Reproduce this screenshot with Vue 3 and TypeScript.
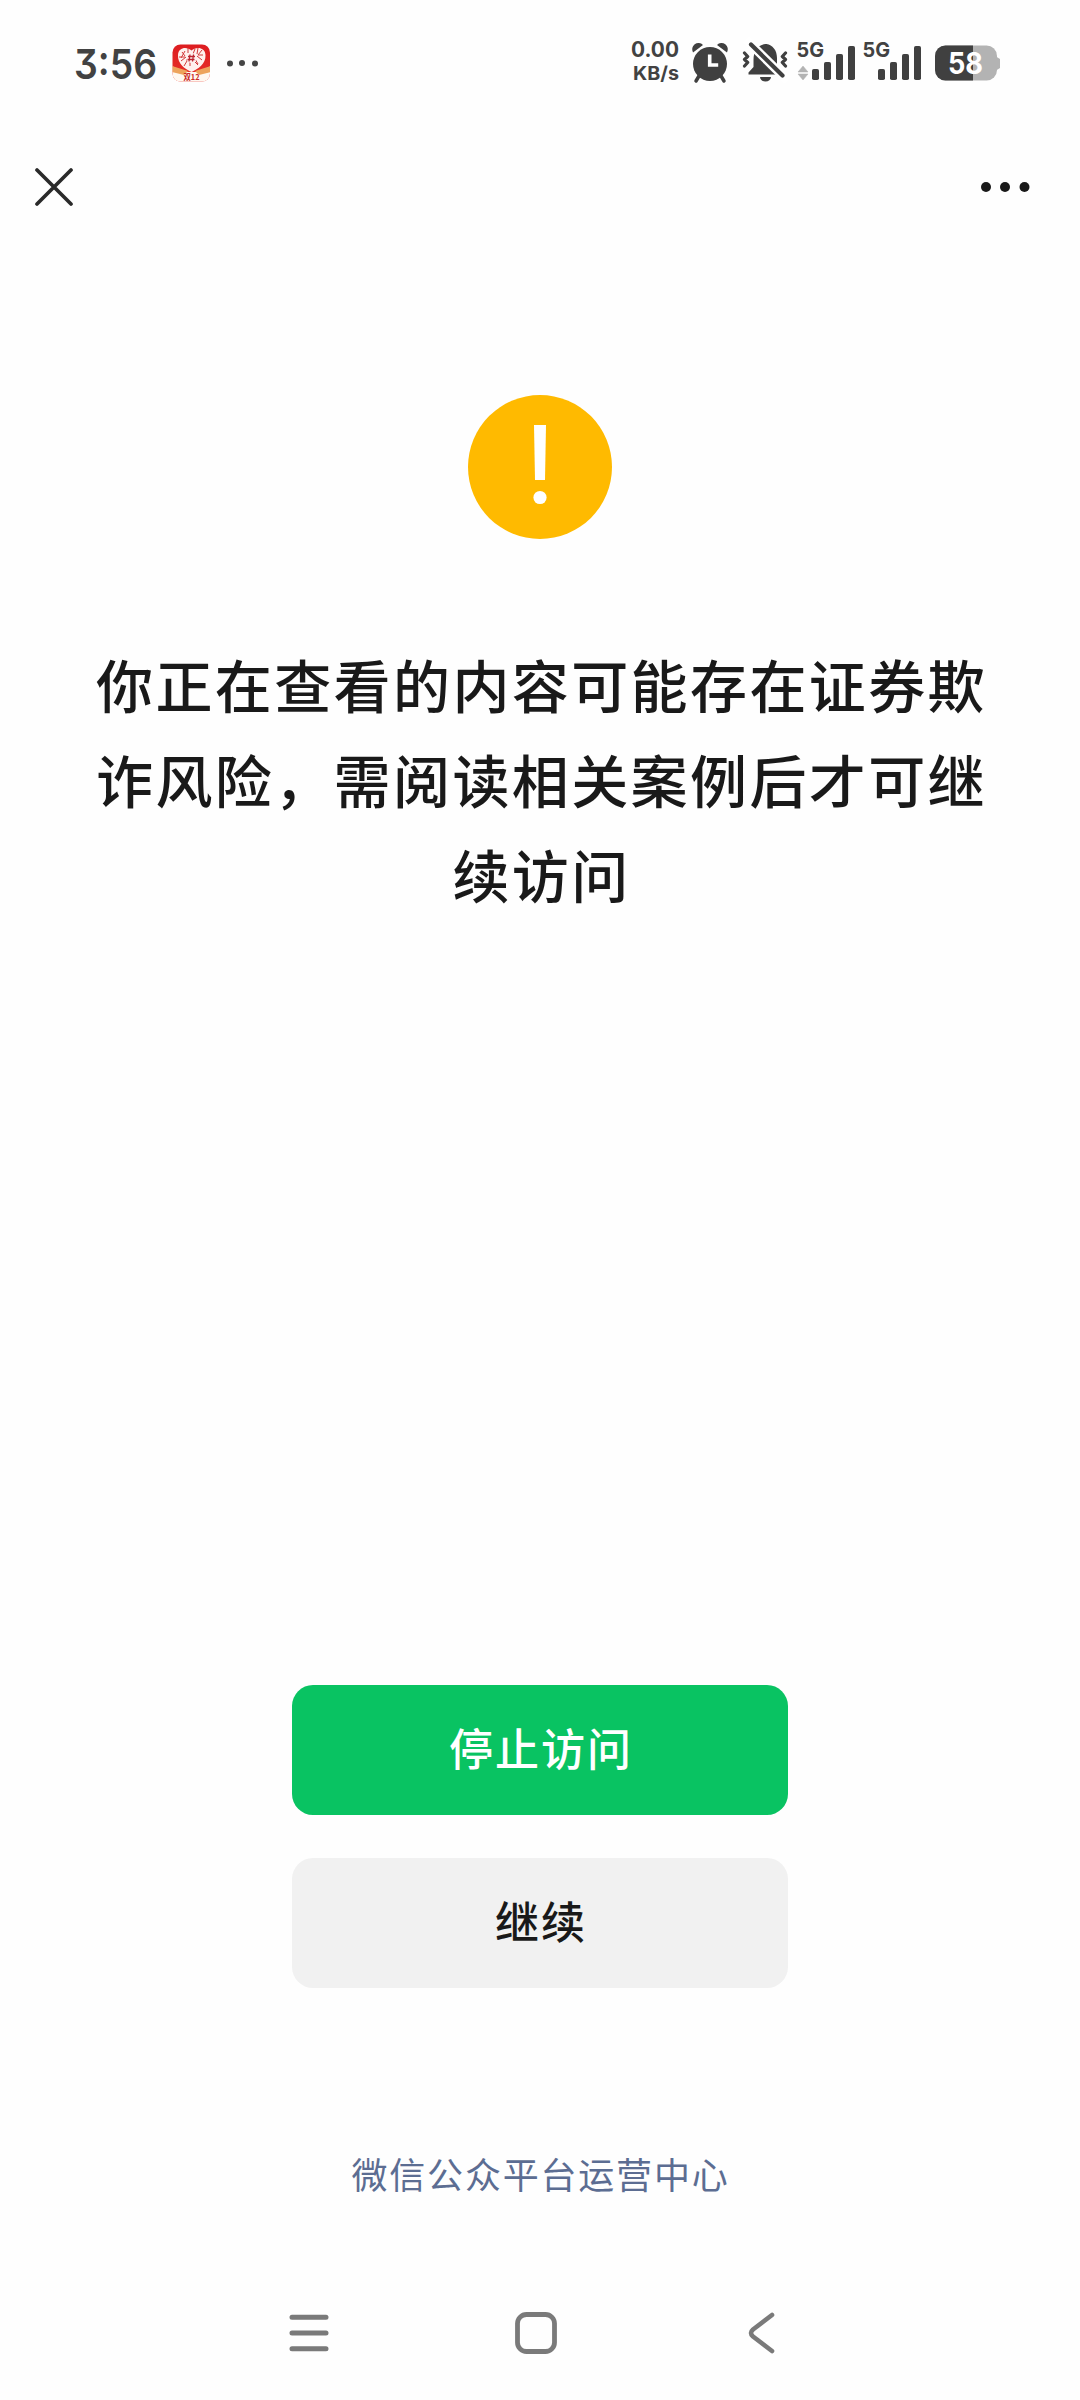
<script setup lang="ts">
const title: string[] = [
  '你正在查看的内容可能存在证券欺',
  '诈风险，需阅读相关案例后才可继',
  '续访问',
]
const signals: { id: string; x: number; data: boolean }[] = [
  { id: 'sim1', x: 796, data: true },
  { id: 'sim2', x: 862, data: false },
]
const bars = [
  { x: 16, y: 69, h: 11 },
  { x: 28, y: 62, h: 18 },
  { x: 40, y: 54, h: 26 },
  { x: 52, y: 46, h: 34 },
]
</script>

<template>
  <div class="screen">
    <header class="status">
      <svg width="1080" height="126" viewBox="0 0 1080 126">
        <!-- clock and notifications -->
        <text x="74" y="78.500" class="dark time" textLength="83" lengthAdjust="spacingAndGlyphs">3:56</text>
        <defs>
          <linearGradient id="appRed" x1="0" y1="0" x2="0" y2="1">
            <stop offset="0" stop-color="#dd1c20" />
            <stop offset="1" stop-color="#e8322a" />
          </linearGradient>
          <clipPath id="appClip"><rect x="172.500" y="44.500" width="37.500" height="37" rx="8" /></clipPath>
        </defs>
        <g clip-path="url(#appClip)">
          <rect x="172" y="44" width="39" height="38" fill="url(#appRed)" />
          <path d="M172 66L183 72H200L211 66V82H172Z" fill="#fff8f0" />
          <path d="M172 66L188 71L184 75L172 72ZM211 66L195 71L199 75L211 72Z" fill="#eda45c" />
        </g>
        <path d="M191.500 50.500C187 46.500 178.500 47 178 55C177.500 64 185 69 191.500 72C198 69 206 64 205.500 55C205 47 196 46.500 191.500 50.500Z" fill="#fff1ee" />
        <path d="M182 52l3 4m0-5l-4 7m0 3l5-4m-2 9l3-5m1-13v5m7-4l-2 5m5-6l-1 6m5-4l-4 5m5 0h-5m4 5l-5-4m1 8l-3-5m-5 7v-6m-4 0h6m3 2l3 3M179 57h6" stroke="#d33a3a" stroke-width="1" fill="none" />
        <circle cx="191.500" cy="58" r="5" fill="#fff1ee" />
        <path d="M190 54.500l-1 7m4.500-7l-1 7M188 56.500h7m-7.500 3h7" stroke="#bd2630" stroke-width="1.300" fill="none" />
        <text x="183.500" y="79.500" class="badge" textLength="16" lengthAdjust="spacingAndGlyphs">双12</text>
        <g fill="#454545">
          <circle cx="230" cy="63.500" r="3" /><circle cx="242" cy="63" r="3" /><circle cx="255" cy="63.500" r="3" />
        </g>

        <!-- network speed -->
        <text x="631" y="57" class="dark speed" textLength="48" lengthAdjust="spacingAndGlyphs">0.00</text>
        <text x="633" y="80" class="dark unit" textLength="46" lengthAdjust="spacingAndGlyphs">KB/s</text>

        <!-- alarm -->
        <path d="M693 52.500a6.300 6.300 0 0 1 10-7.500ZM727 52.500a6.300 6.300 0 0 0-10-7.500Z" fill="#404040" />
        <path d="M699 76l-3 5M721 76l3 5" stroke="#404040" stroke-width="3.500" stroke-linecap="round" />
        <circle cx="710" cy="64" r="17" fill="#404040" />
        <path d="M709.700 54.500V65h8.500" stroke="#fff" stroke-width="3.600" fill="none" />

        <!-- muted bell -->
        <path d="M748.500 74.500v-2l5-5.500V60c0-10 5-15 12-16a3 3 0 0 1 1 0c6 1 10.500 6 10.500 14v9l5 7.500Z" fill="#404040" />
        <path d="M760 77h11a5.500 4.500 0 0 1-11 0Z" fill="#404040" />
        <path d="M746 39.500L787.500 80.500" stroke="#fff" stroke-width="9" />
        <path d="M751 44.500L782.500 75.500" stroke="#404040" stroke-width="4.200" stroke-linecap="round" />
        <path d="M744.500 53l3.200 3.500-3.200 3 3.200 3-3.200 3.500M785.500 53l-3.200 3.500 3.200 3-3.200 3 3.200 3.500" stroke="#404040" stroke-width="3.200" fill="none" stroke-linecap="round" stroke-linejoin="round" />

        <!-- signal strength -->
        <g v-for="s in signals" :key="s.id" :transform="`translate(${s.x} 0)`">
          <text x="0.500" y="57" class="dark net" textLength="27.500" lengthAdjust="spacingAndGlyphs">5G</text>
          <path v-if="s.data" d="M7 66l5 6H2ZM7 80l5-6H2Z" fill="#b3b3b3" stroke="#b3b3b3" stroke-width=".5" />
          <rect v-for="b in bars" :key="b.x" :x="b.x" :y="b.y" width="7" :height="b.h" rx="1.800" fill="#404040" />
        </g>

        <!-- battery -->
        <clipPath id="cell"><rect x="935" y="45.500" width="62" height="35" rx="10.500" /></clipPath>
        <path d="M996 56.500l4 2.500v9l-4 2.500Z" fill="#b3b3b3" />
        <g clip-path="url(#cell)">
          <rect x="935" y="45" width="62" height="36" fill="#b3b3b3" />
          <rect x="935" y="45" width="38" height="36" fill="#404040" />
        </g>
        <text x="948" y="73.500" class="level" textLength="35" lengthAdjust="spacingAndGlyphs">58</text>
      </svg>
    </header>

    <nav class="bar">
      <svg width="38" height="38" viewBox="0 0 38 38">
        <path d="M2 2L36 36M36 2L2 36" stroke="#2a2a2a" stroke-width="3.700" stroke-linecap="round" />
      </svg>
      <svg width="50" height="12" viewBox="0 0 50 12" fill="#191919">
        <circle cx="6" cy="6" r="5" /><circle cx="25" cy="6" r="5" /><circle cx="44.500" cy="6" r="5" />
      </svg>
    </nav>

    <main class="content">
      <svg class="warn" width="144" height="144" viewBox="0 0 144 144">
        <circle cx="72" cy="72" r="72" fill="#ffba00" />
        <path d="M66 30H78L77 85H67Z" fill="#fff" />
        <circle cx="72" cy="102.500" r="6.600" fill="#fff" />
      </svg>
      <h1 class="title">
        <span v-for="line in title" :key="line">{{ line }}</span>
      </h1>
    </main>

    <div class="actions">
      <button class="btn primary">停止访问</button>
      <button class="btn">继续</button>
    </div>

    <a class="source">微信公众平台运营中心</a>

    <footer class="sysnav">
      <svg width="40" height="38" viewBox="0 0 40 38">
        <path d="M3 3.200H37M3 19H37M3 34.800H37" stroke="#7a7a7a" stroke-width="5" stroke-linecap="round" />
      </svg>
      <svg class="home" width="42" height="42" viewBox="0 0 42 42">
        <rect x="2.500" y="2.500" width="37" height="37" rx="9" fill="none" stroke="#7a7a7a" stroke-width="4.800" />
      </svg>
      <svg width="28" height="42" viewBox="0 0 28 42">
        <path d="M24 3L5 17.500Q1 21 5 24.500L24 39" fill="none" stroke="#7a7a7a" stroke-width="4.600" stroke-linecap="round" stroke-linejoin="round" />
      </svg>
    </footer>
  </div>
</template>

<style>
body {
  margin: 0;
  background: #fefefe;
}
</style>

<style scoped>
.screen {
  width: 1080px;
  height: 2400px;
  display: flex;
  flex-direction: column;
  align-items: center;
  background: #fefefe;
  font-family: "Noto Sans CJK SC", sans-serif;
  color: #191919;
  overflow: hidden;
}
svg {
  display: block;
  flex: none;
}
.status {
  height: 126px;
}
.dark {
  fill: #424242;
  font-family: Inter, sans-serif;
  font-weight: 700;
}
.time {
  font-size: 41.500px;
  font-weight: 600;
  font-feature-settings: "cv09";
}
.speed {
  font-size: 21px;
}
.unit {
  font-size: 19px;
}
.net {
  font-size: 20.500px;
}
.level {
  fill: #fff;
  font: 700 29.500px Inter, sans-serif;
}
.badge {
  fill: #c92a25;
  font: 700 8px "Noto Sans CJK SC", sans-serif;
}
.bar {
  box-sizing: border-box;
  width: 1080px;
  height: 121px;
  padding: 0 50px 0 35px;
  display: flex;
  align-items: center;
  justify-content: space-between;
}
.content {
  height: 1438px;
  display: flex;
  flex-direction: column;
  align-items: center;
}
.warn {
  margin-top: 148px;
}
.title {
  margin: 97px 0 0;
  padding-left: 3px;
  font-size: 57px;
  font-weight: 500;
  line-height: 95px;
  letter-spacing: 2.400px;
  text-align: center;
}
.title span {
  display: block;
  white-space: nowrap;
}
.actions {
  display: flex;
  flex-direction: column;
  gap: 43px;
}
.btn {
  width: 496px;
  height: 130px;
  padding: 0 0 6px 2px;
  border: 0;
  border-radius: 21px;
  background: #f1f1f1;
  color: #191919;
  font: 500 44px/1 "Noto Sans CJK SC", sans-serif;
  letter-spacing: 2px;
}
.primary {
  background: #09c362;
  color: #fff;
}
.source {
  margin-top: 157px;
  padding-left: 1px;
  color: #5c6d92;
  font-size: 36px;
  line-height: 56px;
  letter-spacing: 1.800px;
}
.sysnav {
  width: 1080px;
  box-sizing: border-box;
  margin-top: auto;
  height: 134px;
  padding: 0 304px 0 289px;
  display: flex;
  align-items: center;
  justify-content: space-between;
}
.home {
  margin-right: 5px;
}
</style>
